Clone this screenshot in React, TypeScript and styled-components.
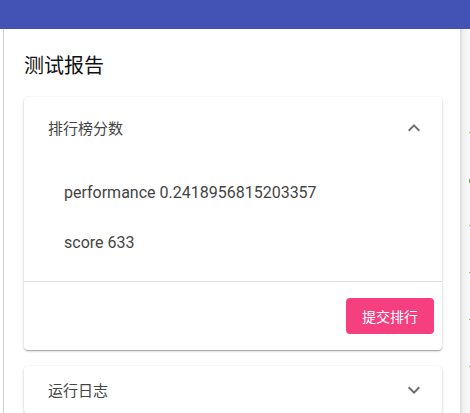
import React from "react";
import styled, { createGlobalStyle } from "styled-components";

const Global = createGlobalStyle`
  html, body { margin: 0; padding: 0; background: #fff; }
  body { font-family: Roboto, "Noto Sans CJK SC", sans-serif; width: 470px; height: 413px; overflow: hidden; }
  *, *::before, *::after { box-sizing: border-box; }
`;

const Page = styled.div`
  width: 470px;
  height: 413px;
  display: flex;
  flex-direction: column;
  overflow: hidden;
`;

const AppBar = styled.header`
  height: 29px;
  flex: none;
  background: #4252b5;
`;

const Body = styled.div`
  flex: 1;
  display: flex;
  min-height: 0;
`;

const Rail = styled.div`
  width: 4px;
  flex: none;
  border-right: 1px solid #cfcfcf;
  background: #fff;
`;

const Main = styled.main`
  width: 456px;
  flex: none;
  padding: 0 18px 0 20px;
  background: #fff;
`;

const Title = styled.h1`
  margin: 0;
  padding: 24px 0 0;
  height: 68px;
  font-family: "Noto Sans CJK SC", sans-serif;
  font-weight: 400;
  font-size: 20px;
  line-height: 24px;
  color: #111;
`;

const Card = styled.section`
  background: #fff;
  border-radius: 4px;
  box-shadow: 0 1px 3px rgba(0, 0, 0, 0.2), 0 1px 1px rgba(0, 0, 0, 0.14),
    0 2px 1px -1px rgba(0, 0, 0, 0.12);
  margin-bottom: 16px;
`;

const Summary = styled.div<{ $expanded?: boolean }>`
  height: ${(p) => (p.$expanded ? 64 : 48)}px;
  display: flex;
  align-items: center;
  justify-content: space-between;
  padding: ${(p) => (p.$expanded ? "0 16px 2px 24px" : "0 16px 0 24px")};
`;

const SummaryText = styled.span`
  font-family: "Noto Sans CJK SC", sans-serif;
  font-size: 15px;
  line-height: 20px;
  color: #444;
`;

const Chevron = styled.svg<{ $up?: boolean }>`
  width: 24px;
  height: 24px;
  fill: #707070;
  transform: ${(p) => (p.$up ? "rotate(180deg)" : "none")};
`;

const Details = styled.ul`
  list-style: none;
  margin: 0;
  padding: 6px 24px 14px 40px;
`;

const Item = styled.li`
  height: 50px;
  display: flex;
  align-items: center;
  font-family: Roboto, sans-serif;
  font-size: 16px;
  color: #444;
`;

const Actions = styled.div`
  border-top: 1px solid #e0e0e0;
  display: flex;
  justify-content: flex-end;
  padding: 16px 8px 16px;
`;

const Button = styled.button`
  height: 36px;
  padding: 0 16px;
  border: none;
  border-radius: 4px;
  background: #f53f7f;
  color: #fff;
  font-family: "Noto Sans CJK SC", sans-serif;
  font-size: 14px;
  cursor: pointer;
`;

const Side = styled.aside`
  flex: 1;
  background: linear-gradient(to right, #dcdcdc 0px, #efefef 3px, #f8f8f8 8px);
  display: flex;
  flex-direction: column;
  align-items: flex-end;
  padding-top: 103px;
`;

const Mark = styled.span<{ $tall?: boolean }>`
  display: block;
  width: 1px;
  height: ${(p) => (p.$tall ? 6 : 2)}px;
  background: #6ab04c;
  margin-bottom: ${(p) => (p.$tall ? 42 : 46)}px;
`;

const ChevronIcon = ({ up }: { up?: boolean }) => (
  <Chevron $up={up} viewBox="0 0 24 24">
    <path d="M16.59 8.59L12 13.17 7.41 8.59 6 10l6 6 6-6z" />
  </Chevron>
);

export default function App() {
  return (
    <Page>
      <Global />
      <AppBar />
      <Body>
        <Rail />
        <Main>
          <Title>测试报告</Title>
          <Card>
            <Summary $expanded>
              <SummaryText>排行榜分数</SummaryText>
              <ChevronIcon up />
            </Summary>
            <Details>
              <Item>performance 0.2418956815203357</Item>
              <Item>score 633</Item>
            </Details>
            <Actions>
              <Button>提交排行</Button>
            </Actions>
          </Card>
          <Card>
            <Summary>
              <SummaryText>运行日志</SummaryText>
              <ChevronIcon />
            </Summary>
          </Card>
        </Main>
        <Side>
          <Mark />
          <Mark $tall />
          <Mark />
          <Mark />
          <Mark />
          <Mark />
        </Side>
      </Body>
    </Page>
  );
}
